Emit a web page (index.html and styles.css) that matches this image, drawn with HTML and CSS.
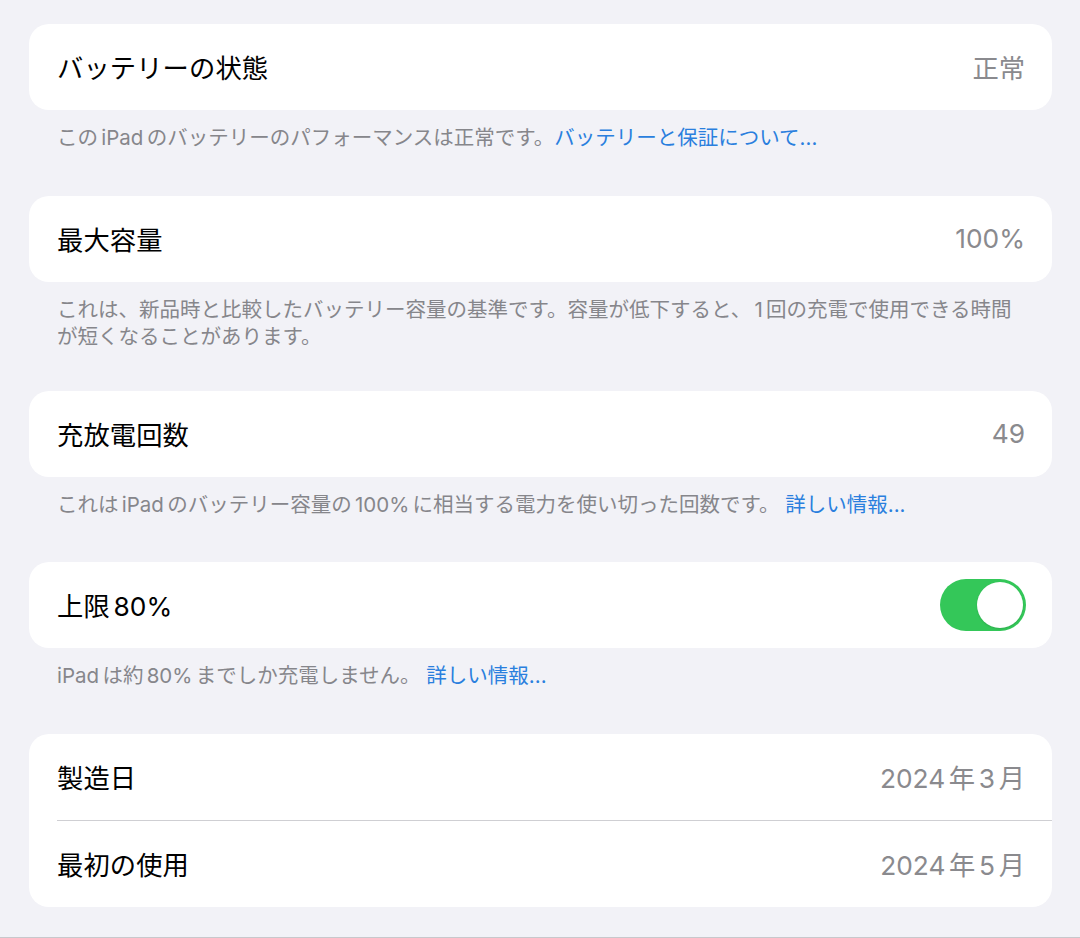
FILE: index.html
```html
<!DOCTYPE html>
<html lang="ja">
<head>
<meta charset="utf-8">
<link rel="stylesheet" href="styles.css">
</head>
<body>
<div class="page">
  <section class="group">
    <div class="card">
      <div class="row"><span class="label">バッテリーの状態</span><span class="value">正常</span></div>
    </div>
    <p class="footer">この<span class="lat">iPad</span>のバッテリーのパフォーマンスは正常です。<a class="link">バッテリーと保証について...</a></p>
  </section>
  <section class="group">
    <div class="card">
      <div class="row"><span class="label">最大容量</span><span class="value">100%</span></div>
    </div>
    <p class="footer two">これは、新品時と比較したバッテリー容量の基準です。容量が低下すると、<span class="lat">1</span>回の充電で使用できる時間が短くなることがあります。</p>
  </section>
  <section class="group">
    <div class="card">
      <div class="row"><span class="label">充放電回数</span><span class="value">49</span></div>
    </div>
    <p class="footer short">これは<span class="lat">iPad</span>のバッテリー容量の<span class="lat">100%</span>に相当する電力を使い切った回数です。 <a class="link">詳しい情報...</a></p>
  </section>
  <section class="group">
    <div class="card">
      <div class="row"><span class="label">上限<span class="lat">80%</span></span><span class="toggle"><span class="knob"></span></span></div>
    </div>
    <p class="footer"><span class="lat first">iPad</span>は約<span class="lat">80%</span>までしか充電しません。 <a class="link">詳しい情報...</a></p>
  </section>
  <section class="group last">
    <div class="card">
      <div class="row"><span class="label">製造日</span><span class="value"><span class="lat first">2024</span>年<span class="lat">3</span>月</span></div>
      <div class="row sep"><span class="label">最初の使用</span><span class="value"><span class="lat first">2024</span>年<span class="lat">5</span>月</span></div>
    </div>
  </section>
</div>
</body>
</html>
```

FILE: styles.css
```css
html, body {
  margin: 0;
  padding: 0;
  background: #f2f2f7;
  height: 938px;
  overflow: hidden;
}
body {
  font-family: "Inter", "Noto Sans CJK JP", sans-serif;
  border-bottom: 1px solid #c8c8cc;
  box-sizing: border-box;
}
.page {
  padding: 24px 28px 0 29px;
}
.group {
  margin: 0;
}
.card {
  background: #ffffff;
  border-radius: 20px;
  overflow: hidden;
}
.row {
  height: 86px;
  display: flex;
  align-items: center;
  justify-content: space-between;
  padding: 0 27px 2px 28px;
  box-sizing: border-box;
}
.row.sep {
  height: 87px;
  margin-left: 28px;
  padding-left: 0;
  border-top: 1px solid #cfcfd3;
}
.label {
  font-size: 26.3px;
  color: #000000;
  letter-spacing: 0.1px;
}
.value {
  font-size: 26.3px;
  color: #8a8a8e;
}
.lat {
  margin: 0 0.14em;
  font-family: "Inter", sans-serif;
  font-weight: 400;
}
.footer {
  margin: 0;
  padding: 14px 36px 45px 28px;
  font-size: 20.5px;
  line-height: 27px;
  color: #86868b;
}
.footer.two {
  padding-bottom: 41px;
}
.footer.short {
  padding-bottom: 44px;
}
.footer .lat {
  margin: 0 0.16em;
}
.lat.first,
.footer .lat.first {
  margin-left: 0;
}
.link {
  color: #2a7fde;
}
.toggle {
  width: 86px;
  height: 52px;
  border-radius: 26px;
  background: #34c759;
  display: flex;
  align-items: center;
  justify-content: flex-end;
  padding: 0 3px;
  box-sizing: border-box;
  margin-right: -1px;
  margin-top: 2px;
}
.knob {
  width: 46px;
  height: 46px;
  border-radius: 50%;
  background: #ffffff;
  box-shadow: 0 1px 2px rgba(0,0,0,0.12);
}
```
